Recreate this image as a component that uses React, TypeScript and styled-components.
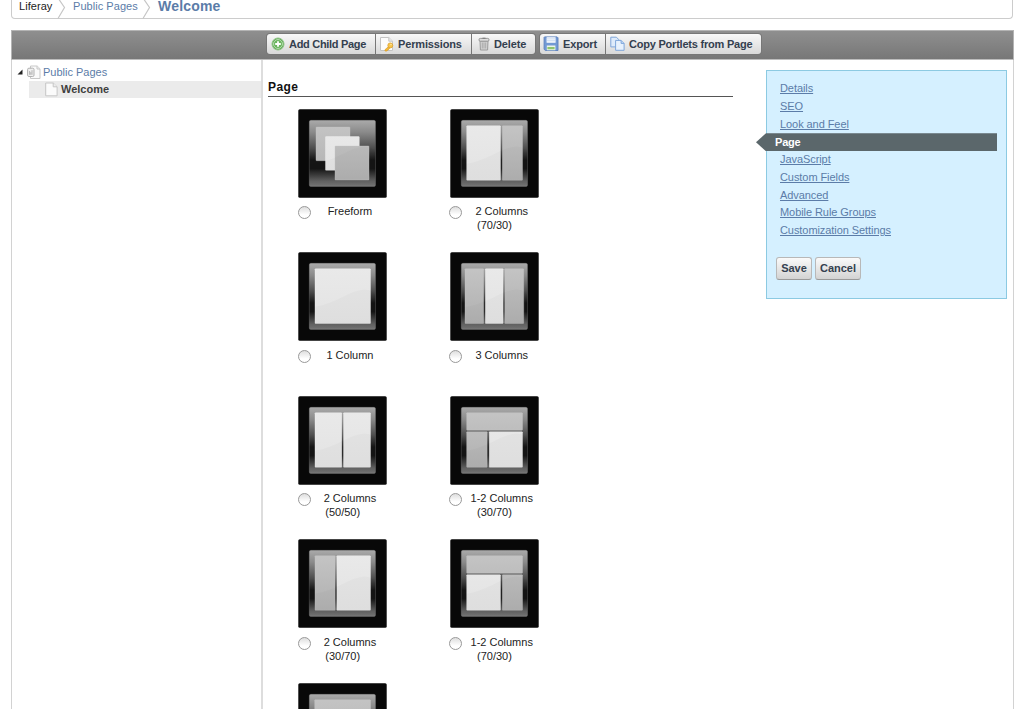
import React from "react";
import styled, { createGlobalStyle, css } from "styled-components";

const GlobalStyle = createGlobalStyle`
  html, body, #root { height: 100%; }
  body {
    margin: 0;
    overflow: hidden;
    background: #fff;
    color: #222;
    font-family: "Liberation Sans", Arial, Helvetica, sans-serif;
    font-size: 11px;
  }
  svg { display: block; flex: none; }
`;

const Screen = styled.div`
  box-sizing: border-box;
  height: 709px;
  width: 1024px;
  padding: 0 10px 0 11px;
  display: flex;
  flex-direction: column;
  overflow: hidden;
`;

const Breadcrumbs = styled.nav`
  box-sizing: border-box;
  width: 1002px;
  height: 19px;
  flex: none;
  display: flex;
  border: 1px solid #ccc;
  border-top: 0;
  border-radius: 0 0 4px 4px;
  padding-left: 7px;
`;

const Crumb = styled.a<{ $width: number; $current?: boolean; $root?: boolean }>`
  box-sizing: border-box;
  width: ${(p) => p.$width}px;
  flex: none;
  padding-left: ${(p) => (p.$root ? 0 : 6)}px;
  line-height: 12px;
  white-space: nowrap;
  color: ${(p) => (p.$root ? "#222" : "#5b7ca8")};
  letter-spacing: 0.05px;
  ${(p) => p.$current && css`font-size: 14px; font-weight: bold; letter-spacing: 0.2px;`}
`;

const Frame = styled.main`
  box-sizing: border-box;
  width: 1003px;
  flex: 1;
  margin-top: 11px;
  display: flex;
  flex-direction: column;
  border: 1px solid #d2d2d2;
  border-top: 0;
  border-bottom: 0;
`;

const Toolbar = styled.header`
  box-sizing: border-box;
  height: 30px;
  flex: none;
  margin: 0 -1px;
  display: flex;
  align-items: center;
  gap: 5px;
  padding: 0 0 2px 255px;
  border: 1px solid #b4b4b4;
  border-bottom-color: #bdbdbd;
  background: linear-gradient(#8f8f8f, #777);
`;

const ButtonGroup = styled.div`
  display: flex;
  gap: 1px;
  height: 20px;
  border-radius: 3px;
  overflow: hidden;
  background: #777;
  box-shadow: 0 0 0 1px #777;
`;

const ToolButton = styled.button<{ $width: number; $pad: number; $spacing: number }>`
  box-sizing: border-box;
  width: ${(p) => p.$width}px;
  height: 20px;
  padding: 0 0 0 ${(p) => p.$pad}px;
  border: 0;
  display: flex;
  align-items: center;
  gap: 4px;
  background: linear-gradient(#f8f8f8, #d8d8d8);
  color: #34404f;
  font: bold 11px "Liberation Sans", Arial, sans-serif;
  letter-spacing: ${(p) => p.$spacing}px;
  white-space: nowrap;
`;

const Columns = styled.div`
  flex: 1;
  min-height: 0;
  display: flex;
`;

const Tree = styled.aside`
  box-sizing: border-box;
  width: 251px;
  flex: none;
  border-right: 2px solid #ddd;
  padding-top: 4px;
`;

const TreeRow = styled.div<{ $selected?: boolean }>`
  box-sizing: border-box;
  height: 17px;
  display: flex;
  align-items: center;
  color: #5b7ca8;
  padding: 0 0 1px 5px;
  ${(p) =>
    p.$selected &&
    css`
      margin-left: 17px;
      padding-left: 16px;
      background: #ebebeb;
      color: #3f3f3f;
      font-weight: bold;
    `}
`;

const TreeIcon = styled.span`
  margin-left: 3px;
`;

const TreeLabel = styled.span<{ $gap: number }>`
  margin-left: ${(p) => p.$gap}px;
  line-height: 12px;
  padding-bottom: 1px;
`;

const Content = styled.section`
  box-sizing: border-box;
  width: 470px;
  flex: none;
  padding: 19px 0 0 5px;
`;

const Heading = styled.h2`
  box-sizing: border-box;
  height: 18px;
  margin: 0 0 11.6px;
  border-bottom: 1px solid #555;
  color: #111;
  font-size: 12px;
  line-height: 17px;
  letter-spacing: 0.4px;
`;

const TemplateGrid = styled.div`
  display: grid;
  grid-template-columns: 89px 89px;
  column-gap: 62.8px;
  grid-auto-rows: 143.6px;
  padding-left: 30.2px;
`;

const Template = styled.label`
  display: block;
  text-align: center;
  line-height: 14px;
  color: #222;
`;

const Caption = styled.div`
  margin-top: 6.5px;
`;

const Radio = styled.input.attrs({ type: "radio", name: "template" })`
  appearance: none;
  box-sizing: border-box;
  float: left;
  width: 13px;
  height: 13px;
  margin: 2px 2px -2px -0.5px;
  border: 1px solid #999;
  border-radius: 50%;
  background: linear-gradient(#dedede, #fff 70%);
`;

const Panel = styled.aside`
  box-sizing: border-box;
  width: 241px;
  height: 229px;
  margin: 10px 0 0 33px;
  border: 1px solid #8ccae2;
  background: #d5f0ff;
  padding-top: 9px;
`;

const Links = styled.ul`
  list-style: none;
  margin: 0;
  padding: 0;
`;

const LinkItem = styled.li`
  height: 17.75px;
  line-height: 17.75px;
  padding-left: 13px;
  color: #5b7ca8;
`;

const PanelLink = styled.a`
  text-decoration: underline;
  text-underline-offset: 1px;
  letter-spacing: -0.07px;
`;

const ActiveItem = styled.li`
  height: 18px;
  line-height: 18px;
  width: 222px;
  margin: 0 0 -0.25px -11px;
  padding-left: 19px;
  background: #5b676b;
  clip-path: polygon(0 50%, 10px 0, 100% 0, 100% 100%, 10px 100%);
  color: #fff;
  font-weight: bold;
  letter-spacing: -0.2px;
`;

const Actions = styled.div`
  display: flex;
  gap: 3px;
  margin: 17px 0 0 9px;
`;

const ActionButton = styled.button<{ $width: number }>`
  box-sizing: border-box;
  width: ${(p) => p.$width}px;
  height: 23px;
  padding: 0 0 1px;
  border: 1px solid #b8b8b8;
  border-bottom-color: #999;
  border-radius: 3px;
  background: linear-gradient(#fafafa, #d3d3d3);
  color: #34404f;
  font: bold 11px "Liberation Sans", Arial, sans-serif;
`;

const Chevron = () => (
  <svg width="10" height="19" viewBox="0 0 10 19" fill="none" stroke="#c6c6c6" strokeWidth="1.2">
    <path d="M1-2 7.5 7.5 1 18.5" />
  </svg>
);

const Disclosure = () => (
  <svg width="7" height="6" viewBox="0 0 7 6">
    <path d="M5.5 .5V5.5H.5z" fill="#222" />
  </svg>
);

const AddIcon = () => (
  <svg width="14" height="14" viewBox="0 0 14 14">
    <circle cx="7" cy="7" r="6" fill="#5fa854" stroke="#8fc487" />
    <circle cx="7" cy="7" r="4.5" fill="#6bb55f" stroke="#c9e6c3" strokeWidth=".8" />
    <path d="M7 4.2v5.6M4.2 7h5.6" stroke="#fff" strokeWidth="1.8" />
  </svg>
);

const PermissionsIcon = () => (
  <svg width="14" height="16" viewBox="0 0 14 16">
    <path d="M.5 1.5h8.3l3.7 3.7v9.3H.5z" fill="#fcfcfc" stroke="#c4c4c4" />
    <path d="M8.8 1.5v3.7h3.7" fill="#e8e8e8" stroke="#c4c4c4" />
    <path d="m9 10.2-4 3.5v1.3h2l.6-1 .9-.2.4-1.1 1.2-.8" fill="#f5ba38" stroke="#d89b28" strokeWidth=".7" />
    <circle cx="10.3" cy="9.4" r="2.5" fill="#f8c64d" stroke="#d89b28" strokeWidth=".7" />
    <circle cx="11" cy="8.6" r=".7" fill="#fff3c4" />
  </svg>
);

const TrashIcon = () => (
  <svg width="12" height="14" viewBox="0 0 12 14">
    <path d="M2 4h8l-.4 9H2.4z" fill="#d4d4d4" stroke="#9a9a9a" />
    <path d="M4.3 5.5v6M6 5.5v6M7.7 5.5v6" stroke="#999" strokeWidth=".7" />
    <rect x="1" y="1.4" width="10" height="2.8" rx="1.3" fill="#ddd" stroke="#959595" />
    <path d="M4.5 1.2h3" stroke="#777" />
  </svg>
);

const SaveIcon = () => (
  <svg width="16" height="16" viewBox="0 0 16 16">
    <path d="M1.5.9h12.6l.9.9v12.7H2.4l-1.3-1.2V1.4z" fill="#7299d4" stroke="#5a80bd" strokeWidth=".9" />
    <path d="M3.6 1.3h9v5.5h-9z" fill="#fff" />
    <path d="M3.6 2.9h9M3.6 4.8h9" stroke="#b6cdec" strokeWidth=".8" />
    <path d="M3.8 9.4h8.6v4.8H3.8z" fill="#edf5e9" />
    <path d="M4.4 10.9h7.2v2.4H4.4z" fill="#8fc46f" />
  </svg>
);

const CopyIcon = () => (
  <svg width="15" height="16" viewBox="0 0 15 16" fill="#deebfb" stroke="#7fa6da">
    <path d="M.8 1.2h5.6l2.2 2.2v7.5H.8z" />
    <path d="M5.6 4.4h5.5l3 3v6.9H5.6z" fill="#e7f1fd" />
    <path d="M11.1 4.4v3h3" fill="#bfd7f5" />
  </svg>
);

const PagesIcon = () => (
  <svg width="14" height="15" viewBox="0 0 14 15" fill="#fafafa" stroke="#c8c8c8">
    <path d="M3.5 1h6.7L13 3.8V13.5H3.5z" />
    <path d="M10 1v3h3" fill="#eee" />
    <rect x=".6" y="3.2" width="6.4" height="8.3" rx="1.3" fill="#f0f0f0" stroke="#b0b0b0" />
    <path d="M2.6 6v3.8M3.8 7.2v2.6M5 5.2v4.6" stroke="#a5a5a5" strokeWidth=".8" />
  </svg>
);

const PageIcon = () => (
  <svg width="13" height="15" viewBox="0 0 13 15" fill="#fbfbfb" stroke="#c6c6c6">
    <path d="M.7 1h7.5l3.9 3.8v9H.7z" />
    <path d="M8.2 1v3.8h3.9" fill="#eee" />
  </svg>
);

type Tone = "light" | "mid";
type Block = [x: number, y: number, right: number, bottom: number, tone: Tone];

interface Layout {
  id: string;
  name?: string;
  ratio?: string;
  blocks: Block[];
}

const layouts: Layout[] = [
  { id: "free", name: "Freeform", blocks: [[18, 18, 52, 51.7, "mid"], [27.5, 27.5, 61.3, 61.3, "light"], [37, 37, 71, 71, "mid"]] },
  { id: "c7030", name: "2 Columns", ratio: "(70/30)", blocks: [[16.7, 16.7, 50.5, 71.3, "light"], [52.3, 16.7, 72.5, 71.3, "mid"]] },
  { id: "c1", name: "1 Column", blocks: [[17, 16.7, 72.5, 71.5, "light"]] },
  { id: "c3", name: "3 Columns", blocks: [[15, 16.7, 33.7, 71.5, "mid"], [35.3, 16.7, 53.2, 71.5, "light"], [54.7, 16.7, 73.7, 71.5, "mid"]] },
  { id: "c5050", name: "2 Columns", ratio: "(50/50)", blocks: [[17, 16.7, 43.8, 71.3, "light"], [45.5, 16.7, 72.5, 71.3, "light"]] },
  { id: "c123070", name: "1-2 Columns", ratio: "(30/70)", blocks: [[16.7, 16.7, 72.5, 34.2, "mid"], [16.7, 35.7, 37.2, 71.3, "mid"], [39.2, 35.7, 72.5, 71.3, "light"]] },
  { id: "c3070", name: "2 Columns", ratio: "(30/70)", blocks: [[17, 16.7, 37.2, 71.3, "mid"], [38.8, 16.7, 72.5, 71.3, "light"]] },
  { id: "c127030", name: "1-2 Columns", ratio: "(70/30)", blocks: [[16.7, 16.7, 72.5, 34.2, "mid"], [16.7, 35.7, 50.5, 71.3, "light"], [52.3, 35.7, 72.5, 71.3, "mid"]] },
  { id: "c121", blocks: [[16.7, 16.7, 72.5, 34.2, "mid"]] },
];

const Thumbnail = ({ id, blocks }: { id: string; blocks: Block[] }) => (
  <svg width="89" height="89" viewBox="0 0 89 89">
    <defs>
      <linearGradient id={`${id}-bg`} x1="0" y1="0" x2="0" y2="1">
        <stop offset="0" stopColor="#aaa" />
        <stop offset=".18" stopColor="#8a8a8a" />
        <stop offset=".42" stopColor="#4e4e4e" />
        <stop offset=".6" stopColor="#151515" />
        <stop offset=".73" stopColor="#151515" />
        <stop offset=".92" stopColor="#636363" />
        <stop offset="1" stopColor="#777" />
      </linearGradient>
      <linearGradient id={`${id}-mid`} gradientUnits="userSpaceOnUse" x1="0" y1="16" x2="0" y2="72">
        <stop offset="0" stopColor="#c4c4c4" />
        <stop offset="1" stopColor="#b0b0b0" />
      </linearGradient>
      <linearGradient id={`${id}-light`} gradientUnits="userSpaceOnUse" x1="0" y1="16" x2="0" y2="72">
        <stop offset="0" stopColor="#e9e9e9" />
        <stop offset="1" stopColor="#e3e3e3" />
      </linearGradient>
    </defs>
    <rect x=".3" y=".3" width="88.4" height="88.4" rx="1.5" fill="#080808" />
    <rect x="11.3" y="11.3" width="66.2" height="66.2" rx="1.5" fill={`url(#${id}-bg)`} stroke="#909090" strokeOpacity=".4" strokeWidth=".7" />
    {blocks.map(([x, y, r, b, tone], i) => (
      <rect key={i} x={x} y={y} width={r - x} height={b - y} rx=".6" fill={`url(#${id}-${tone})`} stroke={tone === "light" ? "#f3f3f3" : "#c6c6c6"} strokeOpacity=".6" strokeWidth=".6" />
    ))}
    <path d="M12 55C35 54 49 39 66 37.5C72 37 77 41 77 43V76H12z" fill="#000" fillOpacity=".018" />
  </svg>
);

const linksBefore = ["Details", "SEO", "Look and Feel"];
const linksAfter = ["JavaScript", "Custom Fields", "Advanced", "Mobile Rule Groups", "Customization Settings"];

const PanelItem = ({ text }: { text: string }) => (
  <LinkItem>
    <PanelLink>{text}</PanelLink>
  </LinkItem>
);

export default function App() {
  return (
    <Screen>
      <GlobalStyle />
      <Breadcrumbs>
        <Crumb $width={38} $root>Liferay</Crumb>
        <Chevron />
        <Crumb $width={75}>Public Pages</Crumb>
        <Chevron />
        <Crumb $width={80} $current>Welcome</Crumb>
      </Breadcrumbs>
      <Frame>
        <Toolbar>
          <ButtonGroup>
            <ToolButton $width={108} $pad={4} $spacing={-0.3}><AddIcon />Add Child Page</ToolButton>
            <ToolButton $width={95} $pad={4} $spacing={-0.15}><PermissionsIcon />Permissions</ToolButton>
            <ToolButton $width={63} $pad={6} $spacing={-0.15}><TrashIcon />Delete</ToolButton>
          </ButtonGroup>
          <ButtonGroup>
            <ToolButton $width={65} $pad={3} $spacing={-0.15}><SaveIcon />Export</ToolButton>
            <ToolButton $width={155} $pad={4} $spacing={-0.22}><CopyIcon />Copy Portlets from Page</ToolButton>
          </ButtonGroup>
        </Toolbar>
        <Columns>
          <Tree>
            <TreeRow>
              <Disclosure />
              <TreeIcon><PagesIcon /></TreeIcon>
              <TreeLabel $gap={2}>Public Pages</TreeLabel>
            </TreeRow>
            <TreeRow $selected>
              <PageIcon />
              <TreeLabel $gap={3}>Welcome</TreeLabel>
            </TreeRow>
          </Tree>
          <Content>
            <Heading>Page</Heading>
            <TemplateGrid>
              {layouts.map((l) => (
                <Template key={l.id}>
                  <Thumbnail id={l.id} blocks={l.blocks} />
                  {l.name && (
                    <Caption>
                      <Radio />
                      {l.name}
                      {l.ratio && <><br />{l.ratio}</>}
                    </Caption>
                  )}
                </Template>
              ))}
            </TemplateGrid>
          </Content>
          <Panel>
            <Links>
              {linksBefore.map((t) => <PanelItem key={t} text={t} />)}
              <ActiveItem>Page</ActiveItem>
              {linksAfter.map((t) => <PanelItem key={t} text={t} />)}
            </Links>
            <Actions>
              <ActionButton $width={36}>Save</ActionButton>
              <ActionButton $width={46}>Cancel</ActionButton>
            </Actions>
          </Panel>
        </Columns>
      </Frame>
    </Screen>
  );
}
